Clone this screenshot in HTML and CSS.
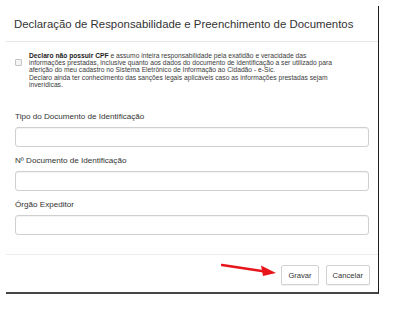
FILE: index.html
```html
<!DOCTYPE html>
<html lang="pt-BR">
<head>
    <meta charset="UTF-8">
    <meta name="viewport" content="width=device-width, initial-scale=1.0">
    <title>Declaração de Responsabilidade</title>
    <link rel="stylesheet" href="styles.css">
</head>
<body>
    <div class="modal">
        <div class="modal-header">
            <h4 class="modal-title">Declaração de Responsabilidade e Preenchimento de Documentos</h4>
        </div>
        <div class="modal-body">
            <label class="declaro">
                <input type="checkbox" class="check">
                <span class="declaro-text"><b>Declaro não possuir CPF</b> e assumo inteira responsabilidade pela exatidão e veracidade das informações prestadas, inclusive quanto aos dados do documento de identificação a ser utilizado para aferição do meu cadastro no Sistema Eletrônico de Informação ao Cidadão - e-Sic.<br>Declaro ainda ter conhecimento das sanções legais aplicáveis caso as informações prestadas sejam inverídicas.</span>
            </label>

            <div class="field">
                <label for="tipoDoc">Tipo do Documento de Identificação</label>
                <input type="text" id="tipoDoc" class="form-control">
            </div>
            <div class="field">
                <label for="numDoc">Nº Documento de Identificação</label>
                <input type="text" id="numDoc" class="form-control">
            </div>
            <div class="field">
                <label for="orgao">Órgão Expeditor</label>
                <input type="text" id="orgao" class="form-control">
            </div>
        </div>
        <div class="modal-footer">
            <svg class="arrow" width="56" height="14" viewBox="0 0 56 14">
                <line x1="1" y1="3" x2="44" y2="9.5" stroke="#e8161c" stroke-width="2.6" stroke-linecap="round"/>
                <polygon points="55,11 40,3.5 42,14" fill="#e8161c"/>
            </svg>
            <button type="button" class="btn">Gravar</button>
            <button type="button" class="btn">Cancelar</button>
        </div>
    </div>
</body>
</html>
```

FILE: styles.css
```css
body {
    margin: 0;
    background: #fff;
    font-family: "Liberation Sans", Arial, sans-serif;
    color: #333;
}
.modal {
    margin: 6px 0 0 6px;
    width: 372px;
    background: #fff;
    border-right: 1px solid #1e1e1e;
    border-bottom: 2px solid #454545;
}
.modal-header {
    height: 35px;
    padding: 0 8px;
    display: flex;
    align-items: center;
    border-bottom: 1px solid #e6e6e6;
}
.modal-title {
    margin: 0;
    font-size: 11.4px;
    font-weight: normal;
    color: #333;
}
.modal-body {
    padding: 10px 9px 10px 9px;
}
.declaro {
    display: flex;
    align-items: flex-start;
    gap: 7px;
    margin-bottom: 24px;
}
.check {
    appearance: none;
    margin: 7px 0 0 0;
    width: 7px;
    height: 7px;
    border: 1px solid #c4c4c4;
    border-radius: 1px;
    background: #f4f4f4;
    flex-shrink: 0;
}
.declaro-text {
    max-width: 311px;
    font-size: 6.7px;
    line-height: 7.2px;
    color: #3a3a3a;
}
.declaro-text b {
    color: #222;
}
.field {
    margin-bottom: 9px;
}
.field label {
    display: block;
    font-size: 8.1px;
    line-height: 10px;
    margin-bottom: 5px;
    color: #333;
}
.form-control {
    display: block;
    box-sizing: border-box;
    width: 100%;
    height: 20px;
    margin: 0;
    border: 1px solid #cfcfcf;
    border-radius: 3px;
    box-shadow: inset 0 1px 1px rgba(0, 0, 0, 0.05);
    background: #fff;
}
.modal-footer {
    position: relative;
    display: flex;
    justify-content: flex-end;
    gap: 7px;
    padding: 10px 8px 7px 9px;
    border-top: 1px solid #ececec;
}
.btn {
    height: 20px;
    padding: 0 6px;
    border: 1px solid #d2d2d2;
    border-radius: 2px;
    background: #fff;
    box-shadow: 0 1px 1px rgba(0, 0, 0, 0.06);
    font-family: "Liberation Sans", Arial, sans-serif;
    font-size: 7.6px;
    color: #333;
}
.arrow {
    position: absolute;
    left: 215px;
    top: 7px;
}
```
